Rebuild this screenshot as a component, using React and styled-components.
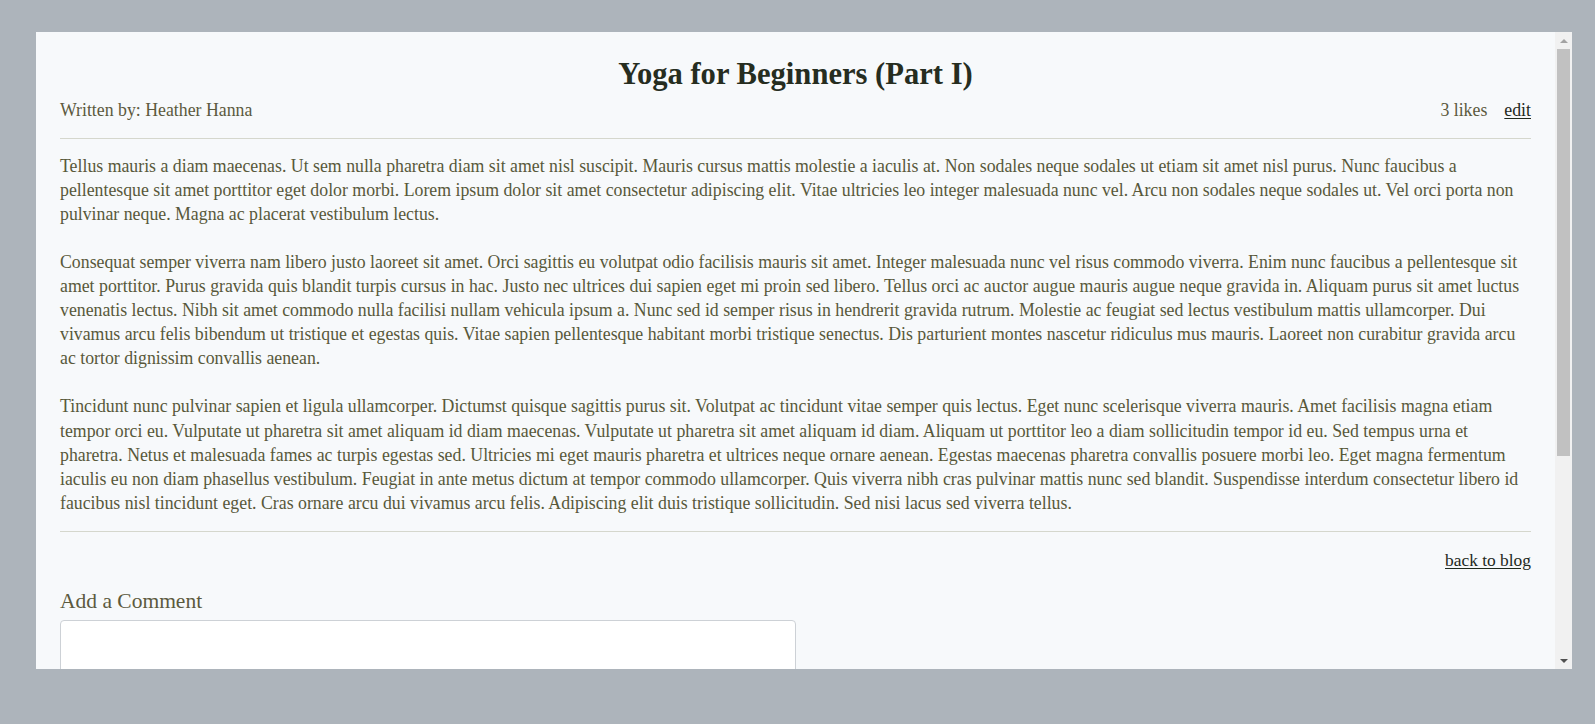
import React from "react";
import styled, { createGlobalStyle } from "styled-components";

const GlobalStyle = createGlobalStyle`
  html, body {
    margin: 0;
    padding: 0;
    background: #adb4bb;
  }
  * {
    box-sizing: border-box;
  }
`;

const Page = styled.div`
  height: 724px;
  padding: 32px 23px 55px 36px;
  font-family: "Liberation Serif", "Times New Roman", serif;
`;

const Panel = styled.div`
  height: 637px;
  background: #f7f9fb;
  display: flex;
`;

const ScrollArea = styled.div`
  flex: 1;
  min-width: 0;
  overflow: hidden;
`;

// drawn scrollbar (the headless browser hides native ones)
const Scrollbar = styled.div`
  width: 17px;
  flex: none;
  background: #f1f1f1;
  display: flex;
  flex-direction: column;
`;

const ScrollButton = styled.div`
  height: 17px;
  display: flex;
  align-items: center;
  justify-content: center;
`;

const Arrow = styled.span`
  width: 0;
  height: 0;
  border-left: 4px solid transparent;
  border-right: 4px solid transparent;
  ${({ $dir, $color }) =>
    $dir === "up"
      ? `border-bottom: 4px solid ${$color};`
      : `border-top: 4px solid ${$color};`}
`;

const Track = styled.div`
  flex: 1;
  padding: 0 2px;
`;

const Thumb = styled.div`
  height: 407px;
  background: #c1c1c1;
`;

const Content = styled.div`
  padding: 24px 24px 150px;
`;

const Title = styled.h1`
  margin: 0;
  text-align: center;
  font-size: 30.6px;
  line-height: 36px;
  font-weight: 700;
  color: #262d1f;
`;

const Meta = styled.div`
  margin-top: 6px;
  padding-bottom: 16px;
  border-bottom: 1px solid #d5d7cd;
  display: flex;
  justify-content: space-between;
  align-items: center;
  font-size: 17.8px;
  line-height: 24px;
  color: #5c5a3e;
`;

const Actions = styled.div`
  display: flex;
  gap: 17px;
  align-items: center;
`;

const Link = styled.a`
  color: #1f291d;
  text-decoration: underline;
  text-underline-offset: 2px;
  cursor: pointer;
`;

const Body = styled.div`
  padding: 14.5px 0 16px;
  border-bottom: 1px solid #d5d7cd;
`;

const Paragraph = styled.p`
  margin: 0;
  font-size: 17.8px;
  line-height: 24.1px;
  color: #58583a;

  & + & {
    margin-top: 24.1px;
  }
`;

const BackRow = styled.div`
  display: flex;
  justify-content: flex-end;
  margin-top: 16px;
  font-size: 17.4px;
  line-height: 24px;
`;

const CommentHeading = styled.h3`
  margin: 15px 0 5px;
  font-size: 21.5px;
  line-height: 28px;
  font-weight: 400;
  color: #5c5a3e;
`;

const CommentBox = styled.textarea`
  display: block;
  width: 50%;
  height: 200px;
  border: 1px solid #cdd1d6;
  border-radius: 4px;
  background: #ffffff;
  resize: vertical;
  font: inherit;
  padding: 8px;
`;

const paragraphs = [
  "Tellus mauris a diam maecenas. Ut sem nulla pharetra diam sit amet nisl suscipit. Mauris cursus mattis molestie a iaculis at. Non sodales neque sodales ut etiam sit amet nisl purus. Nunc faucibus a pellentesque sit amet porttitor eget dolor morbi. Lorem ipsum dolor sit amet consectetur adipiscing elit. Vitae ultricies leo integer malesuada nunc vel. Arcu non sodales neque sodales ut. Vel orci porta non pulvinar neque. Magna ac placerat vestibulum lectus.",
  "Consequat semper viverra nam libero justo laoreet sit amet. Orci sagittis eu volutpat odio facilisis mauris sit amet. Integer malesuada nunc vel risus commodo viverra. Enim nunc faucibus a pellentesque sit amet porttitor. Purus gravida quis blandit turpis cursus in hac. Justo nec ultrices dui sapien eget mi proin sed libero. Tellus orci ac auctor augue mauris augue neque gravida in. Aliquam purus sit amet luctus venenatis lectus. Nibh sit amet commodo nulla facilisi nullam vehicula ipsum a. Nunc sed id semper risus in hendrerit gravida rutrum. Molestie ac feugiat sed lectus vestibulum mattis ullamcorper. Dui vivamus arcu felis bibendum ut tristique et egestas quis. Vitae sapien pellentesque habitant morbi tristique senectus. Dis parturient montes nascetur ridiculus mus mauris. Laoreet non curabitur gravida arcu ac tortor dignissim convallis aenean.",
  "Tincidunt nunc pulvinar sapien et ligula ullamcorper. Dictumst quisque sagittis purus sit. Volutpat ac tincidunt vitae semper quis lectus. Eget nunc scelerisque viverra mauris. Amet facilisis magna etiam tempor orci eu. Vulputate ut pharetra sit amet aliquam id diam maecenas. Vulputate ut pharetra sit amet aliquam id diam. Aliquam ut porttitor leo a diam sollicitudin tempor id eu. Sed tempus urna et pharetra. Netus et malesuada fames ac turpis egestas sed. Ultricies mi eget mauris pharetra et ultrices neque ornare aenean. Egestas maecenas pharetra convallis posuere morbi leo. Eget magna fermentum iaculis eu non diam phasellus vestibulum. Feugiat in ante metus dictum at tempor commodo ullamcorper. Quis viverra nibh cras pulvinar mattis nunc sed blandit. Suspendisse interdum consectetur libero id faucibus nisl tincidunt eget. Cras ornare arcu dui vivamus arcu felis. Adipiscing elit duis tristique sollicitudin. Sed nisi lacus sed viverra tellus.",
];

export default function App() {
  return (
    <Page>
      <GlobalStyle />
      <Panel>
        <ScrollArea>
          <Content>
            <Title>Yoga for Beginners (Part I)</Title>
            <Meta>
              <span>Written by: Heather Hanna</span>
              <Actions>
                <span>3 likes</span>
                <Link>edit</Link>
              </Actions>
            </Meta>
            <Body>
              {paragraphs.map((p, i) => (
                <Paragraph key={i}>{p}</Paragraph>
              ))}
            </Body>
            <BackRow>
              <Link>back to blog</Link>
            </BackRow>
            <CommentHeading>Add a Comment</CommentHeading>
            <CommentBox />
          </Content>
        </ScrollArea>
        <Scrollbar>
          <ScrollButton>
            <Arrow $dir="up" $color="#a3a3a3" />
          </ScrollButton>
          <Track>
            <Thumb />
          </Track>
          <ScrollButton>
            <Arrow $dir="down" $color="#505050" />
          </ScrollButton>
        </Scrollbar>
      </Panel>
    </Page>
  );
}
